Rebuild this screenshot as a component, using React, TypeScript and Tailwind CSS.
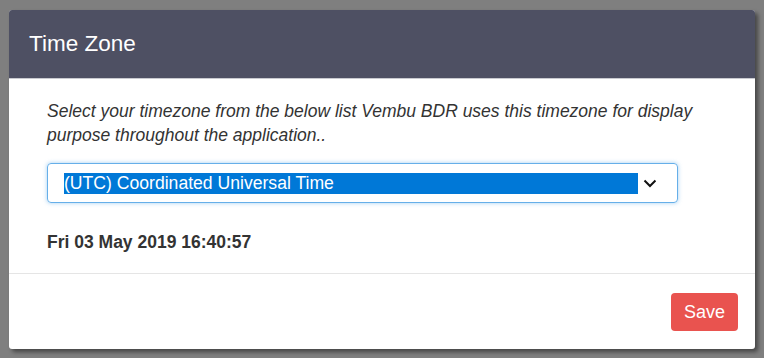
import React from "react";

export default function App() {
  return (
    <div
      className="w-[764px] h-[358px] bg-[#7f7f7f] pt-[10px] pl-[9px] overflow-hidden"
      style={{ fontFamily: '"Liberation Sans", Arial, sans-serif' }}
    >
      <div className="w-[746px] h-[339px] bg-white rounded-[3px] shadow-[3px_3px_4px_rgba(0,0,0,0.45)] flex flex-col overflow-hidden">
        <div className="h-[69px] bg-[#4e5063] flex items-center pl-[20px] border-b border-[#c9cad0]">
          <h1 className="text-white text-[22.5px] leading-none">Time Zone</h1>
        </div>
        <div className="pl-[38px] pr-[20px] pt-[20px] pb-[19px] border-b border-[#e5e5e5]">
          <p className="italic text-[17.5px] leading-[24px] text-[#333]">
            Select your timezone from the below list Vembu BDR uses this timezone for display purpose throughout the application..
          </p>
          <div className="mt-[16px] w-[631px] h-[40px] border border-[#66afe9] rounded-[4px] shadow-[0_0_4px_rgba(102,175,233,0.6)] flex items-center pl-[16px] pr-[20px]">
            <div className="w-[575px] h-[21px] bg-[#0078d7] text-white text-[17.6px] leading-[21px] whitespace-nowrap">
              (UTC) Coordinated Universal Time
            </div>
            <svg width="14" height="9" viewBox="0 0 14 9" className="ml-[5px]">
              <path d="M1.5 1.5 L7 7 L12.5 1.5" fill="none" stroke="#111" strokeWidth="2" />
            </svg>
          </div>
          <div className="mt-[27px] text-[17.5px] leading-[24px] font-bold text-[#333]">
            Fri 03 May 2019 16:40:57
          </div>
        </div>
        <div className="flex justify-end pt-[19px] pr-[17px]">
          <button className="w-[67px] h-[38px] bg-[#e9534f] text-white text-[18px] rounded-[4px]">
            Save
          </button>
        </div>
      </div>
    </div>
  );
}
